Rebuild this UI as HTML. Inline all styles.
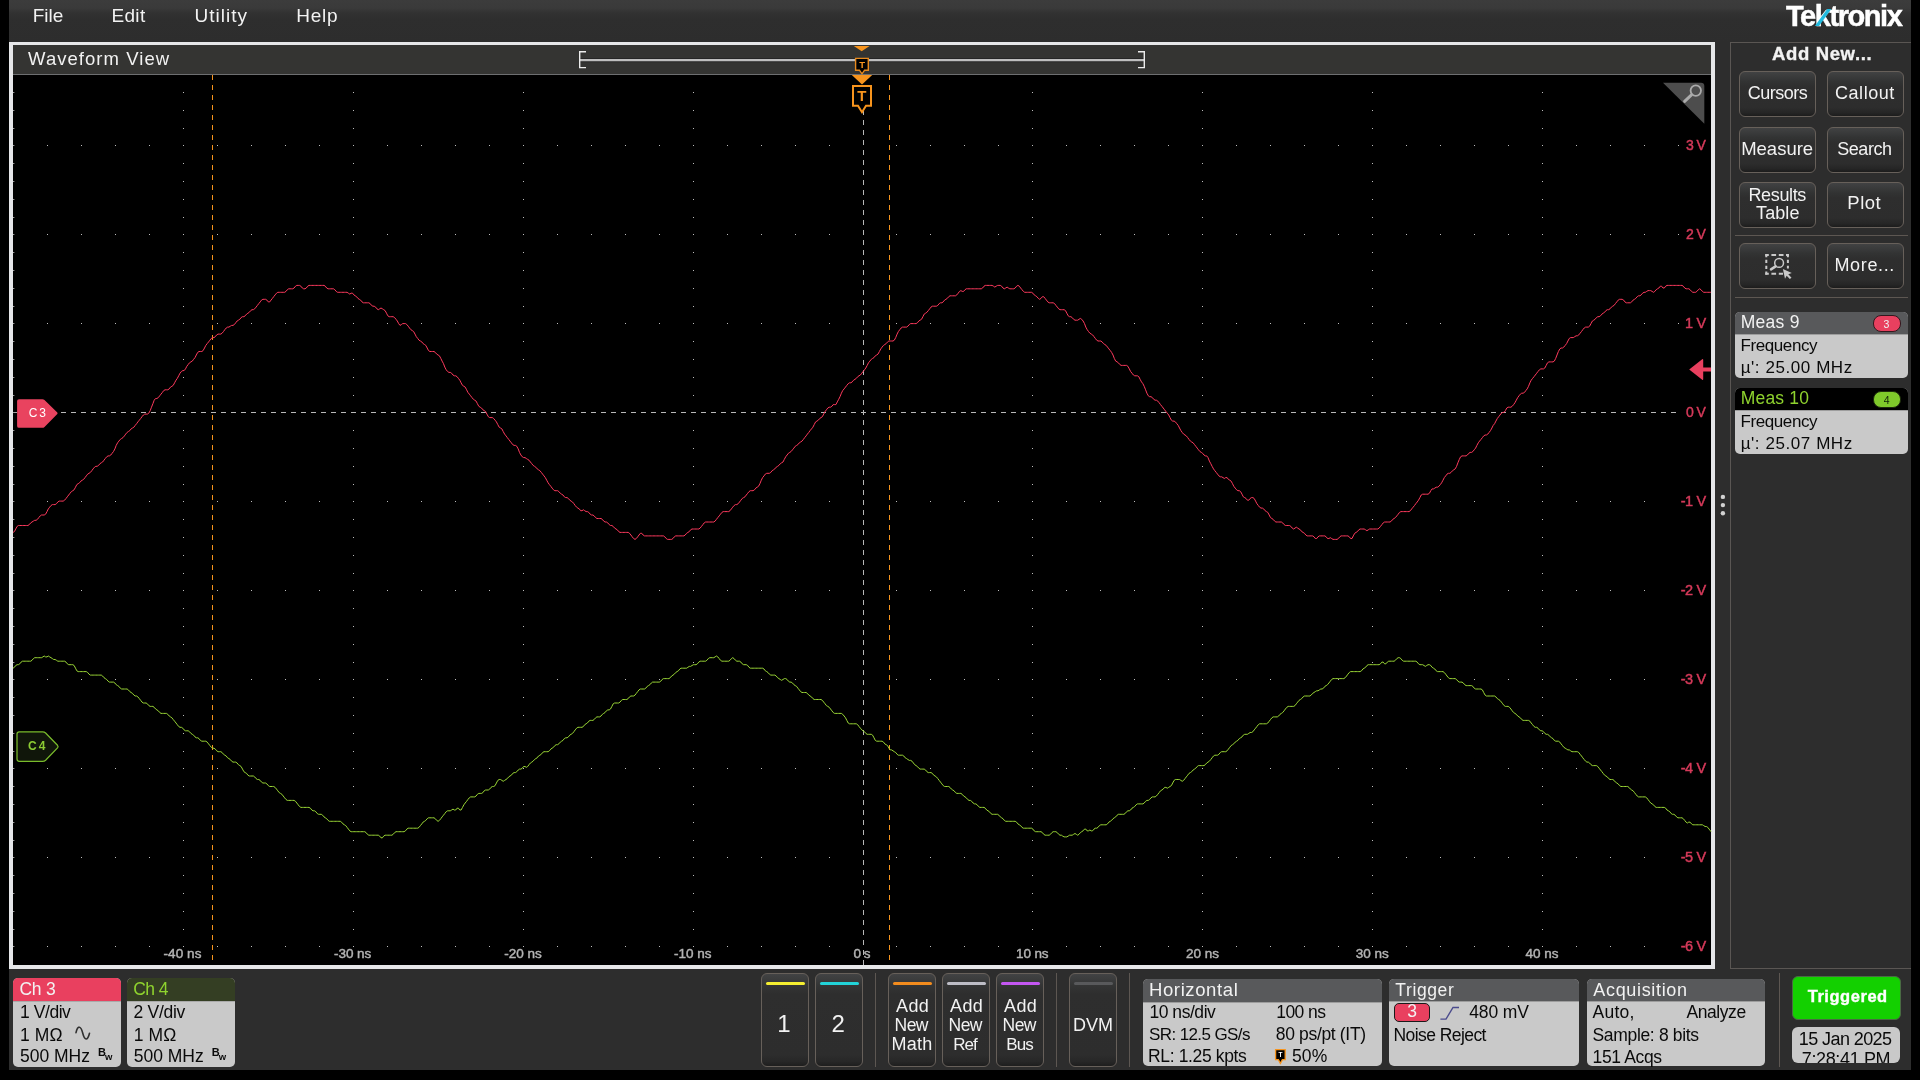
<!DOCTYPE html>
<html lang="en"><head><meta charset="utf-8"><title>Tektronix Waveform View</title>
<style>
html,body{margin:0;padding:0;background:#000}
body{width:1920px;height:1080px;position:relative;overflow:hidden;font-family:"Liberation Sans",sans-serif}
.a{position:absolute}
.t{position:absolute;white-space:pre;line-height:1}
.btn{position:absolute;box-sizing:border-box;border:1px solid #67605a;border-radius:6px;background:linear-gradient(#414243 0,#323333 22%,#2e2e2e 34%,#2d2d2d 80%,#262626 92%,#1c1c1c 100%)}
.vbtn{position:absolute;box-sizing:border-box;border:1px solid #67605a;border-radius:6px;background:linear-gradient(#424344 0,#343535 12%,#2e2e2e 22%,#2d2d2d 88%,#272727 95%,#1e1e1e 100%)}
.bar{position:absolute;height:3.4px;border-radius:2px;width:39px;top:981.8px}
.sep{position:absolute;width:1px;background:#5d5752}
.badge{position:absolute;background:#c9c9c9;border-radius:5px;overflow:hidden}
.bh{position:absolute;left:0;top:0;right:0;background:#58595b;border-bottom:1px solid #9d9d9d}
</style></head>
<body>
<!-- window background -->
<div class="a" style="left:9px;top:0;width:1902px;height:1070px;background:#2d2d2d"></div>
<div class="a" style="left:9px;top:0;width:1902px;height:42px;background:linear-gradient(#3c3c3c 0,#3a3a3a 19%,#323232 30%,#2e2e2e 45%,#2d2d2d 100%)"></div>

<!-- waveform frame -->
<div class="a" style="left:9px;top:42px;width:1706px;height:927px;background:#e6e7e9"></div>
<div class="a" style="left:13px;top:45px;width:1698px;height:29px;background:#343432"></div>
<div class="a" style="left:13px;top:74px;width:1698px;height:1px;background:#6e6f71"></div>
<div class="a" style="left:13px;top:75px;width:1698px;height:890px;background:#000"></div>

<!-- right panel -->
<div class="a" style="left:1730px;top:42px;width:181px;height:927px;box-sizing:border-box;border:1px solid #5a5653;border-right:none"></div>
<div class="btn" style="left:1739.4px;top:71.2px;width:77px;height:46px"></div>
<div class="btn" style="left:1826.6px;top:71.2px;width:77px;height:46px"></div>
<div class="btn" style="left:1739.4px;top:127.4px;width:77px;height:45.6px"></div>
<div class="btn" style="left:1826.6px;top:127.4px;width:77px;height:45.6px"></div>
<div class="btn" style="left:1739.4px;top:182.4px;width:77px;height:45.6px"></div>
<div class="btn" style="left:1826.6px;top:182.4px;width:77px;height:45.6px"></div>
<div class="a" style="left:1735px;top:235px;width:173px;height:1px;background:#5d5752"></div>
<div class="btn" style="left:1739.4px;top:243.4px;width:77px;height:45.6px"></div>
<div class="btn" style="left:1826.6px;top:243.4px;width:77px;height:45.6px"></div>
<div class="a" style="left:1735px;top:297px;width:173px;height:1px;background:#5d5752"></div>

<!-- measurement badges -->
<div class="badge" style="left:1735px;top:312px;width:173px;height:66px"><div class="bh" style="height:22px"></div></div>
<div class="a" style="left:1873px;top:315px;width:28px;height:16.5px;box-sizing:border-box;border-radius:8px;background:#e9405f;border:1px solid #33181e"></div>
<div class="badge" style="left:1735px;top:388px;width:173px;height:66px"><div class="bh" style="height:22px;background:#000"></div></div>
<div class="a" style="left:1873px;top:391px;width:28px;height:16.5px;box-sizing:border-box;border-radius:8px;background:#7fc92b;border:1px solid #1c2a0c"></div>

<!-- bottom: channel badges -->
<div class="badge" style="left:13px;top:978px;width:108px;height:88.5px"><div class="bh" style="height:22.5px;background:#e9405f;border-bottom-color:#aaa"></div></div>
<div class="badge" style="left:126.75px;top:978px;width:108px;height:88.5px"><div class="bh" style="height:22.5px;background:#343e23;border-bottom-color:#aaa"></div></div>

<!-- bottom: buttons -->
<div class="vbtn" style="left:761px;top:973px;width:48px;height:94px"></div>
<div class="vbtn" style="left:815px;top:973px;width:48px;height:94px"></div>
<div class="sep" style="left:875px;top:973px;height:94px"></div>
<div class="vbtn" style="left:888px;top:973px;width:48px;height:94px"></div>
<div class="vbtn" style="left:942px;top:973px;width:48px;height:94px"></div>
<div class="vbtn" style="left:996px;top:973px;width:48px;height:94px"></div>
<div class="sep" style="left:1056px;top:973px;height:94px"></div>
<div class="vbtn" style="left:1069px;top:973px;width:48px;height:94px"></div>
<div class="sep" style="left:1129px;top:973px;height:94px"></div>
<div class="bar" style="left:765.5px;background:#f5ee31"></div>
<div class="bar" style="left:819.5px;background:#22d3d8"></div>
<div class="bar" style="left:892.5px;background:#f28c1e"></div>
<div class="bar" style="left:946.5px;background:#bdbdc6"></div>
<div class="bar" style="left:1000.5px;background:#c457f2"></div>
<div class="bar" style="left:1073.5px;background:#58595b"></div>

<!-- bottom: info badges -->
<div class="badge" style="left:1143px;top:979.2px;width:238.5px;height:87px"><div class="bh" style="height:22.5px"></div></div>
<div class="badge" style="left:1388.7px;top:979.2px;width:190.6px;height:87px"><div class="bh" style="height:22px"></div></div>
<div class="badge" style="left:1586.8px;top:979.2px;width:178.4px;height:87px"><div class="bh" style="height:22px"></div></div>
<div class="a" style="left:1394px;top:1003px;width:36px;height:19px;box-sizing:border-box;border-radius:5px;background:#e9405f;border:1px solid #1a1a1a"></div>
<div class="sep" style="left:1779px;top:973px;height:94px"></div>
<div class="a" style="left:1792.4px;top:976.2px;width:108.6px;height:44px;box-sizing:border-box;border-radius:6px;background:#13d000;border:1px solid #4a6a44"></div>
<div class="a" style="left:1792.2px;top:1026.5px;width:108px;height:35.7px;border-radius:6px;background:#c9c9c9;overflow:hidden;will-change:transform">
<div class="a" style="left:-1792.2px;top:-1026.5px;width:0;height:0"><div class="t" style="left:1799.00px;top:1029px;font-size:18.0px;color:#0a0a0a;letter-spacing:-0.59px;">15 Jan 2025</div>
<div class="t" style="left:1802.00px;top:1049px;font-size:18.0px;color:#0a0a0a;letter-spacing:-0.37px;">7:28:41 PM</div></div>
</div>

<!-- logo -->
<div class="t" id="logo" style="left:1785.5px;top:2px;font-size:29px;font-weight:bold;color:#fff;letter-spacing:-1.45px;-webkit-text-stroke:0.5px #fff;will-change:transform">Tektronix</div>

<!-- graphics -->
<svg class="a" style="left:0;top:0" width="1920" height="1080" viewBox="0 0 1920 1080">
<path d="M47 145.5h1M47 234.5h1M47 323.5h1M47 501.5h1M47 590.5h1M47 679.5h1M47 768.5h1M47 857.5h1M47 946.5h1M81 145.5h1M81 234.5h1M81 323.5h1M81 501.5h1M81 590.5h1M81 679.5h1M81 768.5h1M81 857.5h1M81 946.5h1M115 145.5h1M115 234.5h1M115 323.5h1M115 501.5h1M115 590.5h1M115 679.5h1M115 768.5h1M115 857.5h1M115 946.5h1M149 145.5h1M149 234.5h1M149 323.5h1M149 501.5h1M149 590.5h1M149 679.5h1M149 768.5h1M149 857.5h1M149 946.5h1M183 92.5h1M183 110.5h1M183 128.5h1M183 145.5h1M183 163.5h1M183 181.5h1M183 199.5h1M183 217.5h1M183 234.5h1M183 252.5h1M183 270.5h1M183 288.5h1M183 306.5h1M183 323.5h1M183 341.5h1M183 359.5h1M183 377.5h1M183 395.5h1M183 412.5h1M183 430.5h1M183 448.5h1M183 466.5h1M183 484.5h1M183 501.5h1M183 519.5h1M183 537.5h1M183 555.5h1M183 573.5h1M183 590.5h1M183 608.5h1M183 626.5h1M183 644.5h1M183 662.5h1M183 679.5h1M183 697.5h1M183 715.5h1M183 733.5h1M183 751.5h1M183 768.5h1M183 786.5h1M183 804.5h1M183 822.5h1M183 840.5h1M183 857.5h1M183 875.5h1M183 893.5h1M183 911.5h1M183 929.5h1M183 946.5h1M217 145.5h1M217 234.5h1M217 323.5h1M217 501.5h1M217 590.5h1M217 679.5h1M217 768.5h1M217 857.5h1M217 946.5h1M251 145.5h1M251 234.5h1M251 323.5h1M251 501.5h1M251 590.5h1M251 679.5h1M251 768.5h1M251 857.5h1M251 946.5h1M285 145.5h1M285 234.5h1M285 323.5h1M285 501.5h1M285 590.5h1M285 679.5h1M285 768.5h1M285 857.5h1M285 946.5h1M319 145.5h1M319 234.5h1M319 323.5h1M319 501.5h1M319 590.5h1M319 679.5h1M319 768.5h1M319 857.5h1M319 946.5h1M353 92.5h1M353 110.5h1M353 128.5h1M353 145.5h1M353 163.5h1M353 181.5h1M353 199.5h1M353 217.5h1M353 234.5h1M353 252.5h1M353 270.5h1M353 288.5h1M353 306.5h1M353 323.5h1M353 341.5h1M353 359.5h1M353 377.5h1M353 395.5h1M353 412.5h1M353 430.5h1M353 448.5h1M353 466.5h1M353 484.5h1M353 501.5h1M353 519.5h1M353 537.5h1M353 555.5h1M353 573.5h1M353 590.5h1M353 608.5h1M353 626.5h1M353 644.5h1M353 662.5h1M353 679.5h1M353 697.5h1M353 715.5h1M353 733.5h1M353 751.5h1M353 768.5h1M353 786.5h1M353 804.5h1M353 822.5h1M353 840.5h1M353 857.5h1M353 875.5h1M353 893.5h1M353 911.5h1M353 929.5h1M353 946.5h1M387 145.5h1M387 234.5h1M387 323.5h1M387 501.5h1M387 590.5h1M387 679.5h1M387 768.5h1M387 857.5h1M387 946.5h1M421 145.5h1M421 234.5h1M421 323.5h1M421 501.5h1M421 590.5h1M421 679.5h1M421 768.5h1M421 857.5h1M421 946.5h1M455 145.5h1M455 234.5h1M455 323.5h1M455 501.5h1M455 590.5h1M455 679.5h1M455 768.5h1M455 857.5h1M455 946.5h1M489 145.5h1M489 234.5h1M489 323.5h1M489 501.5h1M489 590.5h1M489 679.5h1M489 768.5h1M489 857.5h1M489 946.5h1M523 92.5h1M523 110.5h1M523 128.5h1M523 145.5h1M523 163.5h1M523 181.5h1M523 199.5h1M523 217.5h1M523 234.5h1M523 252.5h1M523 270.5h1M523 288.5h1M523 306.5h1M523 323.5h1M523 341.5h1M523 359.5h1M523 377.5h1M523 395.5h1M523 412.5h1M523 430.5h1M523 448.5h1M523 466.5h1M523 484.5h1M523 501.5h1M523 519.5h1M523 537.5h1M523 555.5h1M523 573.5h1M523 590.5h1M523 608.5h1M523 626.5h1M523 644.5h1M523 662.5h1M523 679.5h1M523 697.5h1M523 715.5h1M523 733.5h1M523 751.5h1M523 768.5h1M523 786.5h1M523 804.5h1M523 822.5h1M523 840.5h1M523 857.5h1M523 875.5h1M523 893.5h1M523 911.5h1M523 929.5h1M523 946.5h1M557 145.5h1M557 234.5h1M557 323.5h1M557 501.5h1M557 590.5h1M557 679.5h1M557 768.5h1M557 857.5h1M557 946.5h1M591 145.5h1M591 234.5h1M591 323.5h1M591 501.5h1M591 590.5h1M591 679.5h1M591 768.5h1M591 857.5h1M591 946.5h1M625 145.5h1M625 234.5h1M625 323.5h1M625 501.5h1M625 590.5h1M625 679.5h1M625 768.5h1M625 857.5h1M625 946.5h1M659 145.5h1M659 234.5h1M659 323.5h1M659 501.5h1M659 590.5h1M659 679.5h1M659 768.5h1M659 857.5h1M659 946.5h1M693 92.5h1M693 110.5h1M693 128.5h1M693 145.5h1M693 163.5h1M693 181.5h1M693 199.5h1M693 217.5h1M693 234.5h1M693 252.5h1M693 270.5h1M693 288.5h1M693 306.5h1M693 323.5h1M693 341.5h1M693 359.5h1M693 377.5h1M693 395.5h1M693 412.5h1M693 430.5h1M693 448.5h1M693 466.5h1M693 484.5h1M693 501.5h1M693 519.5h1M693 537.5h1M693 555.5h1M693 573.5h1M693 590.5h1M693 608.5h1M693 626.5h1M693 644.5h1M693 662.5h1M693 679.5h1M693 697.5h1M693 715.5h1M693 733.5h1M693 751.5h1M693 768.5h1M693 786.5h1M693 804.5h1M693 822.5h1M693 840.5h1M693 857.5h1M693 875.5h1M693 893.5h1M693 911.5h1M693 929.5h1M693 946.5h1M727 145.5h1M727 234.5h1M727 323.5h1M727 501.5h1M727 590.5h1M727 679.5h1M727 768.5h1M727 857.5h1M727 946.5h1M761 145.5h1M761 234.5h1M761 323.5h1M761 501.5h1M761 590.5h1M761 679.5h1M761 768.5h1M761 857.5h1M761 946.5h1M795 145.5h1M795 234.5h1M795 323.5h1M795 501.5h1M795 590.5h1M795 679.5h1M795 768.5h1M795 857.5h1M795 946.5h1M829 145.5h1M829 234.5h1M829 323.5h1M829 501.5h1M829 590.5h1M829 679.5h1M829 768.5h1M829 857.5h1M829 946.5h1M896 145.5h1M896 234.5h1M896 323.5h1M896 501.5h1M896 590.5h1M896 679.5h1M896 768.5h1M896 857.5h1M896 946.5h1M930 145.5h1M930 234.5h1M930 323.5h1M930 501.5h1M930 590.5h1M930 679.5h1M930 768.5h1M930 857.5h1M930 946.5h1M964 145.5h1M964 234.5h1M964 323.5h1M964 501.5h1M964 590.5h1M964 679.5h1M964 768.5h1M964 857.5h1M964 946.5h1M998 145.5h1M998 234.5h1M998 323.5h1M998 501.5h1M998 590.5h1M998 679.5h1M998 768.5h1M998 857.5h1M998 946.5h1M1032 92.5h1M1032 110.5h1M1032 128.5h1M1032 145.5h1M1032 163.5h1M1032 181.5h1M1032 199.5h1M1032 217.5h1M1032 234.5h1M1032 252.5h1M1032 270.5h1M1032 288.5h1M1032 306.5h1M1032 323.5h1M1032 341.5h1M1032 359.5h1M1032 377.5h1M1032 395.5h1M1032 412.5h1M1032 430.5h1M1032 448.5h1M1032 466.5h1M1032 484.5h1M1032 501.5h1M1032 519.5h1M1032 537.5h1M1032 555.5h1M1032 573.5h1M1032 590.5h1M1032 608.5h1M1032 626.5h1M1032 644.5h1M1032 662.5h1M1032 679.5h1M1032 697.5h1M1032 715.5h1M1032 733.5h1M1032 751.5h1M1032 768.5h1M1032 786.5h1M1032 804.5h1M1032 822.5h1M1032 840.5h1M1032 857.5h1M1032 875.5h1M1032 893.5h1M1032 911.5h1M1032 929.5h1M1032 946.5h1M1066 145.5h1M1066 234.5h1M1066 323.5h1M1066 501.5h1M1066 590.5h1M1066 679.5h1M1066 768.5h1M1066 857.5h1M1066 946.5h1M1100 145.5h1M1100 234.5h1M1100 323.5h1M1100 501.5h1M1100 590.5h1M1100 679.5h1M1100 768.5h1M1100 857.5h1M1100 946.5h1M1134 145.5h1M1134 234.5h1M1134 323.5h1M1134 501.5h1M1134 590.5h1M1134 679.5h1M1134 768.5h1M1134 857.5h1M1134 946.5h1M1168 145.5h1M1168 234.5h1M1168 323.5h1M1168 501.5h1M1168 590.5h1M1168 679.5h1M1168 768.5h1M1168 857.5h1M1168 946.5h1M1202 92.5h1M1202 110.5h1M1202 128.5h1M1202 145.5h1M1202 163.5h1M1202 181.5h1M1202 199.5h1M1202 217.5h1M1202 234.5h1M1202 252.5h1M1202 270.5h1M1202 288.5h1M1202 306.5h1M1202 323.5h1M1202 341.5h1M1202 359.5h1M1202 377.5h1M1202 395.5h1M1202 412.5h1M1202 430.5h1M1202 448.5h1M1202 466.5h1M1202 484.5h1M1202 501.5h1M1202 519.5h1M1202 537.5h1M1202 555.5h1M1202 573.5h1M1202 590.5h1M1202 608.5h1M1202 626.5h1M1202 644.5h1M1202 662.5h1M1202 679.5h1M1202 697.5h1M1202 715.5h1M1202 733.5h1M1202 751.5h1M1202 768.5h1M1202 786.5h1M1202 804.5h1M1202 822.5h1M1202 840.5h1M1202 857.5h1M1202 875.5h1M1202 893.5h1M1202 911.5h1M1202 929.5h1M1202 946.5h1M1236 145.5h1M1236 234.5h1M1236 323.5h1M1236 501.5h1M1236 590.5h1M1236 679.5h1M1236 768.5h1M1236 857.5h1M1236 946.5h1M1270 145.5h1M1270 234.5h1M1270 323.5h1M1270 501.5h1M1270 590.5h1M1270 679.5h1M1270 768.5h1M1270 857.5h1M1270 946.5h1M1304 145.5h1M1304 234.5h1M1304 323.5h1M1304 501.5h1M1304 590.5h1M1304 679.5h1M1304 768.5h1M1304 857.5h1M1304 946.5h1M1338 145.5h1M1338 234.5h1M1338 323.5h1M1338 501.5h1M1338 590.5h1M1338 679.5h1M1338 768.5h1M1338 857.5h1M1338 946.5h1M1372 92.5h1M1372 110.5h1M1372 128.5h1M1372 145.5h1M1372 163.5h1M1372 181.5h1M1372 199.5h1M1372 217.5h1M1372 234.5h1M1372 252.5h1M1372 270.5h1M1372 288.5h1M1372 306.5h1M1372 323.5h1M1372 341.5h1M1372 359.5h1M1372 377.5h1M1372 395.5h1M1372 412.5h1M1372 430.5h1M1372 448.5h1M1372 466.5h1M1372 484.5h1M1372 501.5h1M1372 519.5h1M1372 537.5h1M1372 555.5h1M1372 573.5h1M1372 590.5h1M1372 608.5h1M1372 626.5h1M1372 644.5h1M1372 662.5h1M1372 679.5h1M1372 697.5h1M1372 715.5h1M1372 733.5h1M1372 751.5h1M1372 768.5h1M1372 786.5h1M1372 804.5h1M1372 822.5h1M1372 840.5h1M1372 857.5h1M1372 875.5h1M1372 893.5h1M1372 911.5h1M1372 929.5h1M1372 946.5h1M1406 145.5h1M1406 234.5h1M1406 323.5h1M1406 501.5h1M1406 590.5h1M1406 679.5h1M1406 768.5h1M1406 857.5h1M1406 946.5h1M1440 145.5h1M1440 234.5h1M1440 323.5h1M1440 501.5h1M1440 590.5h1M1440 679.5h1M1440 768.5h1M1440 857.5h1M1440 946.5h1M1474 145.5h1M1474 234.5h1M1474 323.5h1M1474 501.5h1M1474 590.5h1M1474 679.5h1M1474 768.5h1M1474 857.5h1M1474 946.5h1M1508 145.5h1M1508 234.5h1M1508 323.5h1M1508 501.5h1M1508 590.5h1M1508 679.5h1M1508 768.5h1M1508 857.5h1M1508 946.5h1M1542 92.5h1M1542 110.5h1M1542 128.5h1M1542 145.5h1M1542 163.5h1M1542 181.5h1M1542 199.5h1M1542 217.5h1M1542 234.5h1M1542 252.5h1M1542 270.5h1M1542 288.5h1M1542 306.5h1M1542 323.5h1M1542 341.5h1M1542 359.5h1M1542 377.5h1M1542 395.5h1M1542 412.5h1M1542 430.5h1M1542 448.5h1M1542 466.5h1M1542 484.5h1M1542 501.5h1M1542 519.5h1M1542 537.5h1M1542 555.5h1M1542 573.5h1M1542 590.5h1M1542 608.5h1M1542 626.5h1M1542 644.5h1M1542 662.5h1M1542 679.5h1M1542 697.5h1M1542 715.5h1M1542 733.5h1M1542 751.5h1M1542 768.5h1M1542 786.5h1M1542 804.5h1M1542 822.5h1M1542 840.5h1M1542 857.5h1M1542 875.5h1M1542 893.5h1M1542 911.5h1M1542 929.5h1M1542 946.5h1M1576 145.5h1M1576 234.5h1M1576 323.5h1M1576 501.5h1M1576 590.5h1M1576 679.5h1M1576 768.5h1M1576 857.5h1M1576 946.5h1M1610 145.5h1M1610 234.5h1M1610 323.5h1M1610 501.5h1M1610 590.5h1M1610 679.5h1M1610 768.5h1M1610 857.5h1M1610 946.5h1M1644 145.5h1M1644 234.5h1M1644 323.5h1M1644 501.5h1M1644 590.5h1M1644 679.5h1M1644 768.5h1M1644 857.5h1M1644 946.5h1M1678 145.5h1M1678 234.5h1M1678 323.5h1" stroke="#bdbdbd" stroke-width="1" shape-rendering="crispEdges" fill="none"/>
<path d="M13 412.5h3.5" stroke="#aaa" stroke-width="1" shape-rendering="crispEdges"/>
<path d="M13 92.5h1.4M13 110.5h1.4M13 128.5h1.4M13 145.5h1.4M13 163.5h1.4M13 181.5h1.4M13 199.5h1.4M13 217.5h1.4M13 234.5h1.4M13 252.5h1.4M13 270.5h1.4M13 288.5h1.4M13 306.5h1.4M13 323.5h1.4M13 341.5h1.4M13 359.5h1.4M13 377.5h1.4M13 395.5h1.4M13 412.5h1.4M13 430.5h1.4M13 448.5h1.4M13 466.5h1.4M13 484.5h1.4M13 501.5h1.4M13 519.5h1.4M13 537.5h1.4M13 555.5h1.4M13 573.5h1.4M13 590.5h1.4M13 608.5h1.4M13 626.5h1.4M13 644.5h1.4M13 662.5h1.4M13 679.5h1.4M13 697.5h1.4M13 715.5h1.4M13 733.5h1.4M13 751.5h1.4M13 768.5h1.4M13 786.5h1.4M13 804.5h1.4M13 822.5h1.4M13 840.5h1.4M13 857.5h1.4M13 875.5h1.4M13 893.5h1.4M13 911.5h1.4M13 929.5h1.4M13 946.5h1.4" stroke="#9a9a9a" stroke-width="1" fill="none"/>
<g shape-rendering="crispEdges" stroke-width="1" fill="none">
<line x1="61" y1="412.5" x2="1676" y2="412.5" stroke="#b9b9b9" stroke-dasharray="5 5"/>
<line x1="863.5" y1="110" x2="863.5" y2="965" stroke="#b9b9b9" stroke-dasharray="5 5"/>
<line x1="212.5" y1="75" x2="212.5" y2="960" stroke="#f7941d" stroke-dasharray="5 5"/>
<line x1="889.5" y1="75" x2="889.5" y2="960" stroke="#f7941d" stroke-dasharray="5 5"/>
</g>
<path d="M13.0 668.2L14.4 667.3L15.7 665.5L17.1 664.7L18.4 664.7L19.8 663.8L21.1 662.1L22.5 661.2L23.9 661.2L25.2 661.2L26.6 661.2L27.9 661.2L29.3 661.2L30.7 661.2L32.0 660.3L33.4 658.6L34.7 657.7L36.1 657.7L37.4 657.7L38.8 657.7L40.2 657.7L41.5 657.7L42.9 656.9L44.2 656.0L45.6 656.9L47.0 656.9L48.3 656.0L49.7 656.9L51.0 657.7L52.4 658.6L53.7 659.5L55.1 659.5L56.5 660.3L57.8 661.2L59.2 661.2L60.5 661.2L61.9 661.2L63.2 661.2L64.6 661.2L66.0 662.1L67.3 663.8L68.7 664.7L70.0 664.7L71.4 664.7L72.8 664.7L74.1 665.5L75.5 668.2L76.8 670.8L78.2 671.6L79.5 671.6L80.9 671.6L82.3 671.6L83.6 671.6L85.0 671.6L86.3 671.6L87.7 672.5L89.0 674.2L90.4 675.1L91.8 675.1L93.1 675.1L94.5 675.1L95.8 675.1L97.2 675.1L98.6 675.1L99.9 675.1L101.3 675.1L102.6 676.0L104.0 677.7L105.3 678.6L106.7 679.5L108.1 681.2L109.4 682.1L110.8 682.1L112.1 682.1L113.5 682.1L114.9 683.0L116.2 684.7L117.6 685.6L118.9 686.4L120.3 688.2L121.6 689.0L123.0 689.0L124.4 689.0L125.7 689.0L127.1 689.0L128.4 689.9L129.8 691.6L131.1 692.5L132.5 693.4L133.9 695.1L135.2 696.0L136.6 696.0L137.9 696.9L139.3 698.6L140.7 700.4L142.0 702.1L143.4 703.0L144.7 703.0L146.1 703.0L147.4 703.8L148.8 705.6L150.2 706.4L151.5 706.4L152.9 706.4L154.2 707.3L155.6 709.0L156.9 709.9L158.3 710.8L159.7 712.5L161.0 713.4L162.4 713.4L163.7 713.4L165.1 713.4L166.5 713.4L167.8 714.3L169.2 716.0L170.5 716.9L171.9 717.8L173.2 719.5L174.6 721.2L176.0 723.0L177.3 724.7L178.7 726.5L180.0 727.3L181.4 727.3L182.8 728.2L184.1 729.9L185.5 730.8L186.8 730.8L188.2 730.8L189.5 731.7L190.9 733.4L192.3 734.3L193.6 735.2L195.0 736.9L196.3 737.8L197.7 737.8L199.0 738.6L200.4 740.4L201.8 741.2L203.1 741.2L204.5 741.2L205.8 741.2L207.2 742.1L208.6 743.9L209.9 745.6L211.3 747.3L212.6 748.2L214.0 748.2L215.3 749.1L216.7 750.8L218.1 751.7L219.4 751.7L220.8 751.7L222.1 752.5L223.5 754.3L224.8 755.2L226.2 756.0L227.6 757.8L228.9 758.6L230.3 759.5L231.6 761.2L233.0 762.1L234.4 762.1L235.7 762.1L237.1 763.0L238.4 764.7L239.8 765.6L241.1 766.5L242.5 769.1L243.9 771.7L245.2 772.6L246.6 773.4L247.9 775.2L249.3 776.0L250.7 776.0L252.0 776.0L253.4 776.0L254.7 776.9L256.1 778.6L257.4 779.5L258.8 779.5L260.2 780.4L261.5 782.1L262.9 783.0L264.2 783.0L265.6 783.0L266.9 783.9L268.3 785.6L269.7 786.5L271.0 786.5L272.4 786.5L273.7 786.5L275.1 787.4L276.5 789.1L277.8 790.8L279.2 792.6L280.5 793.4L281.9 794.3L283.2 796.0L284.6 797.8L286.0 799.5L287.3 800.4L288.7 800.4L290.0 800.4L291.4 800.4L292.7 800.4L294.1 800.4L295.5 801.3L296.8 803.0L298.2 804.8L299.5 806.5L300.9 807.4L302.3 807.4L303.6 807.4L305.0 807.4L306.3 807.4L307.7 807.4L309.0 807.4L310.4 808.2L311.8 810.0L313.1 810.8L314.5 810.8L315.8 811.7L317.2 813.5L318.6 814.3L319.9 814.3L321.3 814.3L322.6 815.2L324.0 816.9L325.3 817.8L326.7 818.7L328.1 820.4L329.4 821.3L330.8 821.3L332.1 821.3L333.5 821.3L334.8 821.3L336.2 821.3L337.6 821.3L338.9 821.3L340.3 821.3L341.6 822.2L343.0 823.9L344.4 824.8L345.7 825.6L347.1 827.4L348.4 829.1L349.8 830.9L351.1 831.7L352.5 831.7L353.9 831.7L355.2 831.7L356.6 831.7L357.9 831.7L359.3 831.7L360.6 831.7L362.0 831.7L363.4 831.7L364.7 831.7L366.1 832.6L367.4 834.3L368.8 835.2L370.2 835.2L371.5 835.2L372.9 835.2L374.2 835.2L375.6 835.2L376.9 835.2L378.3 835.2L379.7 836.1L381.0 837.8L382.4 837.8L383.7 836.1L385.1 835.2L386.5 835.2L387.8 835.2L389.2 835.2L390.5 835.2L391.9 835.2L393.2 834.3L394.6 832.6L396.0 831.7L397.3 831.7L398.7 831.7L400.0 831.7L401.4 831.7L402.7 831.7L404.1 831.7L405.5 830.8L406.8 829.1L408.2 828.2L409.5 828.2L410.9 828.2L412.3 828.2L413.6 828.2L415.0 828.2L416.3 828.2L417.7 828.2L419.0 827.4L420.4 825.6L421.8 823.9L423.1 822.1L424.5 821.3L425.8 820.4L427.2 818.7L428.5 817.8L429.9 817.8L431.3 817.8L432.6 817.8L434.0 817.8L435.3 818.7L436.7 820.4L438.1 821.3L439.4 820.4L440.8 818.7L442.1 816.9L443.5 815.2L444.8 813.5L446.2 811.7L447.6 810.8L448.9 810.8L450.3 810.8L451.6 810.0L453.0 809.1L454.4 810.0L455.7 810.0L457.1 808.2L458.4 808.2L459.8 810.0L461.1 810.0L462.5 807.4L463.9 804.8L465.2 803.0L466.6 801.3L467.9 799.5L469.3 797.8L470.6 796.9L472.0 796.9L473.4 796.9L474.7 796.9L476.1 796.0L477.4 794.3L478.8 793.4L480.2 793.4L481.5 793.4L482.9 792.6L484.2 790.8L485.6 790.0L486.9 790.0L488.3 790.0L489.7 789.1L491.0 787.4L492.4 786.5L493.7 786.5L495.1 785.6L496.4 783.0L497.8 780.4L499.2 779.5L500.5 779.5L501.9 780.4L503.2 781.3L504.6 780.4L506.0 779.5L507.3 778.6L508.7 776.9L510.0 776.0L511.4 775.2L512.7 773.4L514.1 772.6L515.5 772.6L516.8 771.7L518.2 770.0L519.5 769.1L520.9 769.1L522.3 768.2L523.6 766.5L525.0 766.5L526.3 767.3L527.7 766.5L529.0 764.7L530.4 763.0L531.8 762.1L533.1 761.2L534.5 759.5L535.8 758.6L537.2 757.8L538.5 756.0L539.9 755.2L541.3 754.3L542.6 752.5L544.0 751.7L545.3 751.7L546.7 751.7L548.1 751.7L549.4 750.8L550.8 749.1L552.1 748.2L553.5 747.3L554.8 745.6L556.2 744.7L557.6 744.7L558.9 743.8L560.3 742.1L561.6 741.2L563.0 740.4L564.3 738.6L565.7 737.8L567.1 737.8L568.4 736.9L569.8 735.1L571.1 734.3L572.5 733.4L573.9 731.7L575.2 729.9L576.6 728.2L577.9 727.3L579.3 727.3L580.6 727.3L582.0 727.3L583.4 726.5L584.7 724.7L586.1 723.8L587.4 723.0L588.8 721.2L590.2 720.4L591.5 720.4L592.9 720.4L594.2 719.5L595.6 717.8L596.9 716.9L598.3 716.9L599.7 716.9L601.0 716.0L602.4 714.3L603.7 713.4L605.1 712.5L606.4 710.8L607.8 709.9L609.2 709.9L610.5 709.0L611.9 706.4L613.2 703.8L614.6 703.0L616.0 703.0L617.3 703.0L618.7 703.0L620.0 702.1L621.4 700.4L622.7 699.5L624.1 699.5L625.5 699.5L626.8 699.5L628.2 698.6L629.5 696.9L630.9 696.0L632.2 696.0L633.6 696.0L635.0 695.1L636.3 693.4L637.7 691.6L639.0 689.9L640.4 689.0L641.8 689.0L643.1 689.0L644.5 689.0L645.8 688.2L647.2 686.4L648.5 685.6L649.9 684.7L651.3 683.0L652.6 682.1L654.0 682.1L655.3 682.1L656.7 682.1L658.1 682.1L659.4 682.1L660.8 681.2L662.1 679.5L663.5 678.6L664.8 678.6L666.2 678.6L667.6 678.6L668.9 678.6L670.3 677.7L671.6 676.0L673.0 675.1L674.3 674.2L675.7 672.5L677.1 671.6L678.4 670.8L679.8 669.0L681.1 668.2L682.5 668.2L683.9 668.2L685.2 668.2L686.6 668.2L687.9 667.3L689.3 666.4L690.6 666.4L692.0 665.5L693.4 664.7L694.7 664.7L696.1 664.7L697.4 663.8L698.8 662.1L700.1 661.2L701.5 661.2L702.9 661.2L704.2 661.2L705.6 661.2L706.9 660.3L708.3 658.6L709.7 657.7L711.0 657.7L712.4 657.7L713.7 657.7L715.1 656.9L716.4 656.0L717.8 656.9L719.2 658.6L720.5 660.3L721.9 661.2L723.2 661.2L724.6 661.2L726.0 661.2L727.3 661.2L728.7 661.2L730.0 660.3L731.4 658.6L732.7 657.7L734.1 658.6L735.5 660.3L736.8 661.2L738.2 661.2L739.5 661.2L740.9 662.1L742.2 663.8L743.6 664.7L745.0 664.7L746.3 664.7L747.7 665.5L749.0 667.3L750.4 668.2L751.8 668.2L753.1 668.2L754.5 668.2L755.8 668.2L757.2 668.2L758.5 668.2L759.9 668.2L761.3 668.2L762.6 668.2L764.0 669.0L765.3 670.8L766.7 671.6L768.0 672.5L769.4 674.2L770.8 675.1L772.1 675.1L773.5 675.1L774.8 675.1L776.2 676.0L777.6 677.7L778.9 678.6L780.3 679.5L781.6 680.3L783.0 679.5L784.3 678.6L785.7 678.6L787.1 679.5L788.4 681.2L789.8 682.1L791.1 682.1L792.5 683.0L793.9 684.7L795.2 685.6L796.6 686.4L797.9 688.2L799.3 689.9L800.6 691.6L802.0 692.5L803.4 692.5L804.7 692.5L806.1 692.5L807.4 693.4L808.8 695.1L810.1 696.0L811.5 696.9L812.9 698.6L814.2 699.5L815.6 699.5L816.9 699.5L818.3 699.5L819.7 699.5L821.0 699.5L822.4 700.4L823.7 702.1L825.1 703.8L826.4 705.6L827.8 706.4L829.2 707.3L830.5 709.0L831.9 710.8L833.2 712.5L834.6 713.4L835.9 713.4L837.3 713.4L838.7 713.4L840.0 713.4L841.4 713.4L842.7 714.3L844.1 716.0L845.5 717.8L846.8 720.4L848.2 723.0L849.5 723.8L850.9 723.8L852.2 723.8L853.6 723.8L855.0 723.8L856.3 723.8L857.7 724.7L859.0 726.5L860.4 728.2L861.8 729.9L863.1 730.8L864.5 731.7L865.8 733.4L867.2 734.3L868.5 734.3L869.9 734.3L871.3 734.3L872.6 735.2L874.0 737.8L875.3 740.4L876.7 741.2L878.0 741.2L879.4 741.2L880.8 741.2L882.1 741.2L883.5 742.1L884.8 743.9L886.2 744.7L887.6 745.6L888.9 748.2L890.3 749.9L891.6 749.9L893.0 750.8L894.3 751.7L895.7 752.5L897.1 754.3L898.4 755.2L899.8 755.2L901.1 755.2L902.5 755.2L903.8 756.0L905.2 757.8L906.6 758.6L907.9 759.5L909.3 760.4L910.6 760.4L912.0 761.2L913.4 763.0L914.7 764.7L916.1 765.6L917.4 766.5L918.8 768.2L920.1 769.1L921.5 769.1L922.9 769.1L924.2 769.1L925.6 770.0L926.9 771.7L928.3 772.6L929.7 772.6L931.0 772.6L932.4 773.4L933.7 775.2L935.1 776.0L936.4 776.9L937.8 778.6L939.2 780.4L940.5 782.1L941.9 783.9L943.2 785.6L944.6 786.5L945.9 786.5L947.3 786.5L948.7 786.5L950.0 787.4L951.4 789.1L952.7 790.0L954.1 790.8L955.5 792.6L956.8 793.4L958.2 793.4L959.5 793.4L960.9 793.4L962.2 794.3L963.6 796.0L965.0 796.9L966.3 797.8L967.7 799.5L969.0 800.4L970.4 800.4L971.7 801.3L973.1 803.0L974.5 803.9L975.8 803.9L977.2 804.8L978.5 806.5L979.9 807.4L981.3 807.4L982.6 807.4L984.0 807.4L985.3 808.2L986.7 810.0L988.0 810.8L989.4 811.7L990.8 813.5L992.1 814.3L993.5 814.3L994.8 814.3L996.2 814.3L997.6 814.3L998.9 815.2L1000.3 816.9L1001.6 817.8L1003.0 818.7L1004.3 820.4L1005.7 821.3L1007.1 821.3L1008.4 821.3L1009.8 821.3L1011.1 821.3L1012.5 821.3L1013.8 821.3L1015.2 821.3L1016.6 822.2L1017.9 823.9L1019.3 824.8L1020.6 825.6L1022.0 827.4L1023.4 828.2L1024.7 828.2L1026.1 828.2L1027.4 828.2L1028.8 828.2L1030.1 828.2L1031.5 828.2L1032.9 829.1L1034.2 830.9L1035.6 831.7L1036.9 831.7L1038.3 831.7L1039.6 831.7L1041.0 831.7L1042.4 832.6L1043.7 834.3L1045.1 835.2L1046.4 835.2L1047.8 835.2L1049.2 835.2L1050.5 834.3L1051.9 832.6L1053.2 831.7L1054.6 831.7L1055.9 831.7L1057.3 832.6L1058.7 834.3L1060.0 835.2L1061.4 835.2L1062.7 836.1L1064.1 836.9L1065.5 836.9L1066.8 836.9L1068.2 836.1L1069.5 835.2L1070.9 835.2L1072.2 835.2L1073.6 834.3L1075.0 833.5L1076.3 834.3L1077.7 835.2L1079.0 834.3L1080.4 832.6L1081.7 831.7L1083.1 830.8L1084.5 829.1L1085.8 829.1L1087.2 830.9L1088.5 830.8L1089.9 830.0L1091.3 830.9L1092.6 830.8L1094.0 829.1L1095.3 828.2L1096.7 828.2L1098.0 827.4L1099.4 825.6L1100.8 824.8L1102.1 824.8L1103.5 824.8L1104.8 824.8L1106.2 824.8L1107.5 823.9L1108.9 822.1L1110.3 821.3L1111.6 820.4L1113.0 818.7L1114.3 817.8L1115.7 816.9L1117.1 815.2L1118.4 814.3L1119.8 814.3L1121.1 814.3L1122.5 814.3L1123.8 814.3L1125.2 813.5L1126.6 811.7L1127.9 810.8L1129.3 810.8L1130.6 810.0L1132.0 808.2L1133.4 807.4L1134.7 806.5L1136.1 804.8L1137.4 803.9L1138.8 803.9L1140.1 803.9L1141.5 803.9L1142.9 803.9L1144.2 803.0L1145.6 801.3L1146.9 800.4L1148.3 800.4L1149.6 799.5L1151.0 797.8L1152.4 796.9L1153.7 796.9L1155.1 796.9L1156.4 796.0L1157.8 794.3L1159.2 792.6L1160.5 790.8L1161.9 790.0L1163.2 789.1L1164.6 787.4L1165.9 787.4L1167.3 788.2L1168.7 787.4L1170.0 786.5L1171.4 785.6L1172.7 783.0L1174.1 780.4L1175.4 779.5L1176.8 779.5L1178.2 779.5L1179.5 779.5L1180.9 780.4L1182.2 781.3L1183.6 780.4L1185.0 778.6L1186.3 776.9L1187.7 775.2L1189.0 773.4L1190.4 772.6L1191.7 771.7L1193.1 770.0L1194.5 769.1L1195.8 768.2L1197.2 766.5L1198.5 765.6L1199.9 765.6L1201.3 765.6L1202.6 765.6L1204.0 765.6L1205.3 764.7L1206.7 763.0L1208.0 762.1L1209.4 761.2L1210.8 759.5L1212.1 757.8L1213.5 756.0L1214.8 755.2L1216.2 755.2L1217.5 755.2L1218.9 754.3L1220.3 752.5L1221.6 751.7L1223.0 751.7L1224.3 751.7L1225.7 751.7L1227.1 750.8L1228.4 749.1L1229.8 747.3L1231.1 745.6L1232.5 744.7L1233.8 743.8L1235.2 742.1L1236.6 741.2L1237.9 740.4L1239.3 738.6L1240.6 737.8L1242.0 736.9L1243.3 735.1L1244.7 734.3L1246.1 734.3L1247.4 734.3L1248.8 733.4L1250.1 732.5L1251.5 732.5L1252.9 731.7L1254.2 729.9L1255.6 728.2L1256.9 726.5L1258.3 724.7L1259.6 723.8L1261.0 723.8L1262.4 723.8L1263.7 723.8L1265.1 723.8L1266.4 723.8L1267.8 723.0L1269.2 721.2L1270.5 719.5L1271.9 717.8L1273.2 716.9L1274.6 716.9L1275.9 716.9L1277.3 716.9L1278.7 716.0L1280.0 714.3L1281.4 713.4L1282.7 712.5L1284.1 710.8L1285.4 709.0L1286.8 707.3L1288.2 706.4L1289.5 706.4L1290.9 706.4L1292.2 706.4L1293.6 706.4L1295.0 705.6L1296.3 703.8L1297.7 702.1L1299.0 700.4L1300.4 699.5L1301.7 698.6L1303.1 696.9L1304.5 696.0L1305.8 696.0L1307.2 696.0L1308.5 696.0L1309.9 696.0L1311.2 695.1L1312.6 693.4L1314.0 692.5L1315.3 691.6L1316.7 690.8L1318.0 690.8L1319.4 689.9L1320.8 689.0L1322.1 689.0L1323.5 688.2L1324.8 686.4L1326.2 685.6L1327.5 684.7L1328.9 683.0L1330.3 681.2L1331.6 679.5L1333.0 678.6L1334.3 678.6L1335.7 678.6L1337.1 678.6L1338.4 678.6L1339.8 678.6L1341.1 678.6L1342.5 678.6L1343.8 678.6L1345.2 677.7L1346.6 676.0L1347.9 674.2L1349.3 672.5L1350.6 671.6L1352.0 671.6L1353.3 671.6L1354.7 671.6L1356.1 671.6L1357.4 671.6L1358.8 671.6L1360.1 671.6L1361.5 670.8L1362.9 669.0L1364.2 668.2L1365.6 667.3L1366.9 665.5L1368.3 664.7L1369.6 664.7L1371.0 664.7L1372.4 664.7L1373.7 664.7L1375.1 664.7L1376.4 664.7L1377.8 664.7L1379.1 664.7L1380.5 663.8L1381.9 662.1L1383.2 662.1L1384.6 663.8L1385.9 663.8L1387.3 662.1L1388.7 661.2L1390.0 661.2L1391.4 661.2L1392.7 661.2L1394.1 661.2L1395.4 660.3L1396.8 658.6L1398.2 657.7L1399.5 657.7L1400.9 658.6L1402.2 660.3L1403.6 661.2L1405.0 661.2L1406.3 661.2L1407.7 661.2L1409.0 661.2L1410.4 661.2L1411.7 661.2L1413.1 661.2L1414.5 661.2L1415.8 661.2L1417.2 662.1L1418.5 663.8L1419.9 664.7L1421.2 664.7L1422.6 664.7L1424.0 665.5L1425.3 666.4L1426.7 665.5L1428.0 664.7L1429.4 664.7L1430.8 665.5L1432.1 667.3L1433.5 668.2L1434.8 669.0L1436.2 670.8L1437.5 671.6L1438.9 671.6L1440.3 671.6L1441.6 671.6L1443.0 671.6L1444.3 672.5L1445.7 674.2L1447.0 676.0L1448.4 677.7L1449.8 678.6L1451.1 678.6L1452.5 678.6L1453.8 678.6L1455.2 678.6L1456.6 679.5L1457.9 681.2L1459.3 682.1L1460.6 682.1L1462.0 682.1L1463.3 683.0L1464.7 684.7L1466.1 685.6L1467.4 685.6L1468.8 685.6L1470.1 685.6L1471.5 685.6L1472.9 686.4L1474.2 688.2L1475.6 689.0L1476.9 689.0L1478.3 689.0L1479.6 689.0L1481.0 689.0L1482.4 689.9L1483.7 692.5L1485.1 695.1L1486.4 696.0L1487.8 696.0L1489.1 696.0L1490.5 696.0L1491.9 696.0L1493.2 696.0L1494.6 696.0L1495.9 696.9L1497.3 698.6L1498.7 699.5L1500.0 700.4L1501.4 702.1L1502.7 703.8L1504.1 705.6L1505.4 706.4L1506.8 706.4L1508.2 706.4L1509.5 707.3L1510.9 709.0L1512.2 710.8L1513.6 712.5L1514.9 713.4L1516.3 714.3L1517.7 716.0L1519.0 716.9L1520.4 717.8L1521.7 719.5L1523.1 720.4L1524.5 720.4L1525.8 720.4L1527.2 720.4L1528.5 720.4L1529.9 721.2L1531.2 723.0L1532.6 724.7L1534.0 726.5L1535.3 727.3L1536.7 727.3L1538.0 728.2L1539.4 729.9L1540.8 730.8L1542.1 730.8L1543.5 731.7L1544.8 733.4L1546.2 734.3L1547.5 734.3L1548.9 735.2L1550.3 736.9L1551.6 737.8L1553.0 738.6L1554.3 740.4L1555.7 741.2L1557.0 741.2L1558.4 741.2L1559.8 742.1L1561.1 743.9L1562.5 745.6L1563.8 747.3L1565.2 748.2L1566.6 749.1L1567.9 749.9L1569.3 749.9L1570.6 750.8L1572.0 751.7L1573.3 751.7L1574.7 751.7L1576.1 751.7L1577.4 751.7L1578.8 752.5L1580.1 754.3L1581.5 756.0L1582.8 757.8L1584.2 759.5L1585.6 761.2L1586.9 762.1L1588.3 762.1L1589.6 763.0L1591.0 764.7L1592.4 765.6L1593.7 765.6L1595.1 765.6L1596.4 765.6L1597.8 766.5L1599.1 768.2L1600.5 770.0L1601.9 771.7L1603.2 773.4L1604.6 775.2L1605.9 776.0L1607.3 776.9L1608.7 778.6L1610.0 779.5L1611.4 779.5L1612.7 779.5L1614.1 780.4L1615.4 782.1L1616.8 783.0L1618.2 783.9L1619.5 785.6L1620.9 786.5L1622.2 786.5L1623.6 786.5L1624.9 786.5L1626.3 786.5L1627.7 786.5L1629.0 787.4L1630.4 789.1L1631.7 790.0L1633.1 790.8L1634.5 792.6L1635.8 794.3L1637.2 796.0L1638.5 796.9L1639.9 796.9L1641.2 796.9L1642.6 796.9L1644.0 796.9L1645.3 796.9L1646.7 797.8L1648.0 799.5L1649.4 801.3L1650.7 803.0L1652.1 803.9L1653.5 804.8L1654.8 806.5L1656.2 807.4L1657.5 807.4L1658.9 807.4L1660.3 807.4L1661.6 807.4L1663.0 807.4L1664.3 807.4L1665.7 808.2L1667.0 810.0L1668.4 810.8L1669.8 811.7L1671.1 813.5L1672.5 814.3L1673.8 814.3L1675.2 815.2L1676.6 816.9L1677.9 817.8L1679.3 817.8L1680.6 817.8L1682.0 817.8L1683.3 818.7L1684.7 820.4L1686.1 822.2L1687.4 823.0L1688.8 822.1L1690.1 822.2L1691.5 823.9L1692.8 824.8L1694.2 824.8L1695.6 824.8L1696.9 824.8L1698.3 824.8L1699.6 824.8L1701.0 824.8L1702.4 824.8L1703.7 825.6L1705.1 826.5L1706.4 826.5L1707.8 827.4L1709.1 829.1L1710.5 830.9L1711.0 831.7" stroke="#9ad636" stroke-width="1" fill="none" stroke-linejoin="round"/>
<path d="M13.0 532.4L14.4 531.6L15.7 529.0L17.1 526.4L18.4 525.5L19.8 525.5L21.1 525.5L22.5 525.5L23.9 525.5L25.2 525.5L26.6 525.5L27.9 525.5L29.3 524.6L30.7 522.9L32.0 522.0L33.4 521.1L34.7 520.3L36.1 520.3L37.4 519.4L38.8 517.6L40.2 515.9L41.5 515.0L42.9 515.0L44.2 515.0L45.6 514.2L47.0 511.6L48.3 508.9L49.7 507.2L51.0 505.5L52.4 504.6L53.7 504.6L55.1 504.6L56.5 503.7L57.8 502.0L59.2 501.1L60.5 501.1L61.9 501.1L63.2 501.1L64.6 500.2L66.0 498.5L67.3 496.8L68.7 495.0L70.0 493.3L71.4 491.6L72.8 490.7L74.1 489.8L75.5 487.2L76.8 484.6L78.2 483.7L79.5 482.8L80.9 481.1L82.3 480.2L83.6 479.4L85.0 477.6L86.3 475.9L87.7 474.1L89.0 473.3L90.4 472.4L91.8 470.7L93.1 468.9L94.5 467.2L95.8 466.3L97.2 466.3L98.6 465.4L99.9 463.7L101.3 462.8L102.6 462.0L104.0 460.2L105.3 458.5L106.7 456.8L108.1 455.9L109.4 455.9L110.8 455.0L112.1 453.3L113.5 451.5L114.9 448.9L116.2 445.4L117.6 442.8L118.9 441.1L120.3 439.4L121.6 438.5L123.0 437.6L124.4 435.9L125.7 434.1L127.1 432.4L128.4 431.5L129.8 430.6L131.1 428.9L132.5 428.0L133.9 427.2L135.2 425.4L136.6 423.7L137.9 421.9L139.3 420.2L140.7 418.5L142.0 416.7L143.4 415.0L144.7 414.1L146.1 414.1L147.4 414.1L148.8 413.2L150.2 410.6L151.5 407.2L152.9 403.7L154.2 400.2L155.6 398.5L156.9 398.5L158.3 397.6L159.7 395.8L161.0 394.1L162.4 392.4L163.7 390.6L165.1 389.8L166.5 389.8L167.8 389.8L169.2 388.9L170.5 387.1L171.9 386.3L173.2 385.4L174.6 382.8L176.0 380.2L177.3 378.4L178.7 375.8L180.0 373.2L181.4 371.5L182.8 370.6L184.1 370.6L185.5 368.9L186.8 366.3L188.2 364.5L189.5 362.8L190.9 361.9L192.3 361.1L193.6 359.3L195.0 357.6L196.3 355.0L197.7 352.4L199.0 351.5L200.4 351.5L201.8 351.5L203.1 350.6L204.5 348.0L205.8 345.4L207.2 343.6L208.6 341.9L209.9 340.2L211.3 338.4L212.6 337.6L214.0 337.6L215.3 336.7L216.7 334.9L218.1 334.1L219.4 334.1L220.8 334.1L222.1 333.2L223.5 331.5L224.8 329.7L226.2 328.0L227.6 327.1L228.9 327.1L230.3 326.2L231.6 325.4L233.0 325.4L234.4 324.5L235.7 322.8L237.1 321.0L238.4 320.2L239.8 319.3L241.1 317.6L242.5 316.7L243.9 316.7L245.2 315.8L246.6 314.1L247.9 313.2L249.3 312.3L250.7 310.6L252.0 309.7L253.4 309.7L254.7 308.8L256.1 307.1L257.4 305.4L258.8 303.6L260.2 301.9L261.5 300.1L262.9 299.3L264.2 299.3L265.6 299.3L266.9 300.1L268.3 301.9L269.7 301.9L271.0 300.1L272.4 298.4L273.7 296.7L275.1 294.9L276.5 293.2L277.8 292.3L279.2 292.3L280.5 292.3L281.9 292.3L283.2 292.3L284.6 292.3L286.0 291.4L287.3 289.7L288.7 288.8L290.0 288.8L291.4 288.8L292.7 288.8L294.1 288.0L295.5 286.2L296.8 285.4L298.2 285.4L299.5 285.4L300.9 286.2L302.3 288.0L303.6 288.8L305.0 288.8L306.3 288.0L307.7 286.2L309.0 285.4L310.4 285.4L311.8 285.4L313.1 285.4L314.5 285.4L315.8 285.4L317.2 285.4L318.6 285.4L319.9 285.4L321.3 285.4L322.6 285.4L324.0 285.4L325.3 286.2L326.7 288.0L328.1 288.8L329.4 288.8L330.8 288.8L332.1 288.8L333.5 288.8L334.8 289.7L336.2 291.4L337.6 292.3L338.9 292.3L340.3 292.3L341.6 292.3L343.0 292.3L344.4 292.3L345.7 292.3L347.1 292.3L348.4 293.2L349.8 294.1L351.1 293.2L352.5 293.2L353.9 294.9L355.2 295.8L356.6 296.7L357.9 298.4L359.3 299.3L360.6 300.1L362.0 301.9L363.4 302.8L364.7 302.8L366.1 302.8L367.4 302.8L368.8 302.8L370.2 303.6L371.5 305.4L372.9 306.2L374.2 306.2L375.6 307.1L376.9 308.8L378.3 309.7L379.7 308.8L381.0 308.0L382.4 308.8L383.7 309.7L385.1 310.6L386.5 313.2L387.8 315.8L389.2 316.7L390.5 316.7L391.9 316.7L393.2 316.7L394.6 317.6L396.0 319.3L397.3 321.0L398.7 323.6L400.0 325.4L401.4 324.5L402.7 323.6L404.1 323.6L405.5 323.6L406.8 324.5L408.2 326.2L409.5 328.0L410.9 329.7L412.3 330.6L413.6 331.5L415.0 334.1L416.3 336.7L417.7 338.4L419.0 340.2L420.4 341.0L421.8 341.9L423.1 343.6L424.5 344.5L425.8 345.4L427.2 348.0L428.5 350.6L429.9 351.5L431.3 351.5L432.6 351.5L434.0 351.5L435.3 352.4L436.7 354.1L438.1 355.0L439.4 355.8L440.8 358.4L442.1 361.1L443.5 363.7L444.8 367.1L446.2 369.8L447.6 371.5L448.9 372.4L450.3 372.4L451.6 373.2L453.0 375.0L454.4 375.8L455.7 375.8L457.1 376.7L458.4 378.4L459.8 380.2L461.1 382.8L462.5 385.4L463.9 386.3L465.2 387.1L466.6 389.8L467.9 392.4L469.3 394.1L470.6 395.8L472.0 397.6L473.4 399.3L474.7 400.2L476.1 401.1L477.4 403.7L478.8 406.3L480.2 407.2L481.5 408.0L482.9 409.8L484.2 410.6L485.6 411.5L486.9 414.1L488.3 416.7L489.7 417.6L491.0 417.6L492.4 417.6L493.7 418.5L495.1 420.2L496.4 421.9L497.8 424.6L499.2 427.2L500.5 428.0L501.9 428.9L503.2 431.5L504.6 434.1L506.0 435.9L507.3 437.6L508.7 439.4L510.0 441.1L511.4 442.8L512.7 444.6L514.1 445.4L515.5 445.4L516.8 446.3L518.2 448.9L519.5 452.4L520.9 455.0L522.3 456.8L523.6 457.6L525.0 457.6L526.3 458.5L527.7 459.4L529.0 460.2L530.4 462.0L531.8 463.7L533.1 465.4L534.5 466.3L535.8 467.2L537.2 468.9L538.5 469.8L539.9 470.7L541.3 472.4L542.6 474.1L544.0 475.9L545.3 477.6L546.7 480.2L548.1 482.8L549.4 484.6L550.8 486.3L552.1 488.1L553.5 489.8L554.8 490.7L556.2 490.7L557.6 490.7L558.9 491.6L560.3 493.3L561.6 494.2L563.0 495.0L564.3 496.8L565.7 497.6L567.1 497.6L568.4 498.5L569.8 500.2L571.1 501.1L572.5 502.0L573.9 503.7L575.2 505.5L576.6 507.2L577.9 508.1L579.3 508.9L580.6 510.7L582.0 510.7L583.4 509.8L584.7 510.7L586.1 511.6L587.4 511.6L588.8 512.4L590.2 514.2L591.5 515.0L592.9 515.0L594.2 515.9L595.6 517.6L596.9 518.5L598.3 518.5L599.7 518.5L601.0 518.5L602.4 519.4L603.7 521.1L605.1 522.0L606.4 522.0L607.8 522.9L609.2 524.6L610.5 525.5L611.9 525.5L613.2 526.4L614.6 528.1L616.0 529.0L617.3 529.8L618.7 531.6L620.0 532.4L621.4 532.4L622.7 532.4L624.1 532.4L625.5 532.4L626.8 532.4L628.2 532.4L629.5 533.3L630.9 535.0L632.2 536.8L633.6 538.5L635.0 539.4L636.3 538.5L637.7 536.8L639.0 535.0L640.4 533.3L641.8 533.3L643.1 535.0L644.5 535.9L645.8 535.9L647.2 535.9L648.5 535.9L649.9 535.9L651.3 535.9L652.6 535.9L654.0 535.9L655.3 535.9L656.7 535.9L658.1 535.9L659.4 535.9L660.8 535.9L662.1 535.9L663.5 535.9L664.8 536.8L666.2 538.5L667.6 539.4L668.9 539.4L670.3 539.4L671.6 539.4L673.0 538.5L674.3 536.8L675.7 535.9L677.1 535.9L678.4 535.9L679.8 535.9L681.1 535.9L682.5 535.9L683.9 535.9L685.2 535.0L686.6 533.3L687.9 532.4L689.3 531.6L690.6 529.8L692.0 529.0L693.4 529.0L694.7 529.0L696.1 529.0L697.4 529.0L698.8 529.0L700.1 528.1L701.5 526.4L702.9 524.6L704.2 522.9L705.6 522.0L706.9 522.0L708.3 522.0L709.7 522.0L711.0 522.0L712.4 522.0L713.7 522.0L715.1 521.1L716.4 519.4L717.8 517.6L719.2 515.9L720.5 514.2L721.9 512.4L723.2 511.6L724.6 511.6L726.0 511.6L727.3 511.6L728.7 511.6L730.0 510.7L731.4 508.9L732.7 507.2L734.1 505.5L735.5 504.6L736.8 504.6L738.2 503.7L739.5 502.0L740.9 500.2L742.2 498.5L743.6 497.6L745.0 496.8L746.3 495.0L747.7 493.3L749.0 491.6L750.4 490.7L751.8 490.7L753.1 490.7L754.5 489.8L755.8 488.1L757.2 487.2L758.5 486.3L759.9 483.7L761.3 480.2L762.6 477.6L764.0 475.9L765.3 474.1L766.7 473.3L768.0 473.3L769.4 473.3L770.8 472.4L772.1 470.7L773.5 469.8L774.8 468.9L776.2 467.2L777.6 466.3L778.9 465.4L780.3 463.7L781.6 462.8L783.0 462.0L784.3 459.4L785.7 456.8L787.1 455.0L788.4 453.3L789.8 452.4L791.1 451.5L792.5 449.8L793.9 448.1L795.2 446.3L796.6 445.4L797.9 444.6L799.3 442.8L800.6 442.0L802.0 441.1L803.4 439.4L804.7 437.6L806.1 435.9L807.4 434.1L808.8 432.4L810.1 430.6L811.5 428.9L812.9 427.2L814.2 424.6L815.6 421.9L816.9 421.1L818.3 420.2L819.7 418.5L821.0 417.6L822.4 416.7L823.7 414.1L825.1 411.5L826.4 409.8L827.8 408.0L829.2 407.2L830.5 407.2L831.9 406.3L833.2 404.6L834.6 404.6L835.9 404.6L837.3 401.9L838.7 399.3L840.0 396.7L841.4 393.2L842.7 390.6L844.1 388.9L845.5 387.1L846.8 385.4L848.2 383.7L849.5 382.8L850.9 382.8L852.2 381.9L853.6 380.2L855.0 379.3L856.3 378.4L857.7 376.7L859.0 375.8L860.4 375.0L861.8 373.2L863.1 371.5L864.5 369.8L865.8 368.0L867.2 365.4L868.5 362.8L869.9 361.1L871.3 359.3L872.6 358.4L874.0 357.6L875.3 355.8L876.7 355.0L878.0 354.1L879.4 351.5L880.8 348.9L882.1 347.1L883.5 345.4L884.8 344.5L886.2 343.6L887.6 341.9L888.9 341.0L890.3 341.0L891.6 341.0L893.0 341.0L894.3 340.2L895.7 337.6L897.1 334.1L898.4 331.5L899.8 329.7L901.1 328.0L902.5 327.1L903.8 327.1L905.2 327.1L906.6 327.1L907.9 326.2L909.3 324.5L910.6 323.6L912.0 323.6L913.4 323.6L914.7 323.6L916.1 323.6L917.4 322.8L918.8 321.0L920.1 320.2L921.5 319.3L922.9 316.7L924.2 314.1L925.6 313.2L926.9 312.3L928.3 310.6L929.7 308.8L931.0 307.1L932.4 306.2L933.7 306.2L935.1 306.2L936.4 306.2L937.8 305.4L939.2 303.6L940.5 302.8L941.9 302.8L943.2 301.9L944.6 300.1L945.9 299.3L947.3 298.4L948.7 296.7L950.0 295.8L951.4 295.8L952.7 295.8L954.1 295.8L955.5 295.8L956.8 294.9L958.2 293.2L959.5 291.4L960.9 290.6L962.2 291.4L963.6 291.4L965.0 289.7L966.3 288.8L967.7 288.8L969.0 288.8L970.4 288.8L971.7 288.8L973.1 288.8L974.5 288.8L975.8 288.8L977.2 288.8L978.5 288.8L979.9 288.8L981.3 288.8L982.6 288.0L984.0 286.2L985.3 285.4L986.7 285.4L988.0 285.4L989.4 285.4L990.8 285.4L992.1 285.4L993.5 286.2L994.8 287.1L996.2 286.2L997.6 285.4L998.9 285.4L1000.3 285.4L1001.6 286.2L1003.0 288.0L1004.3 288.8L1005.7 288.0L1007.1 287.1L1008.4 288.0L1009.8 288.8L1011.1 288.8L1012.5 288.8L1013.8 288.8L1015.2 288.0L1016.6 286.2L1017.9 285.4L1019.3 286.2L1020.6 288.0L1022.0 289.7L1023.4 291.4L1024.7 292.3L1026.1 292.3L1027.4 292.3L1028.8 292.3L1030.1 292.3L1031.5 292.3L1032.9 293.2L1034.2 294.9L1035.6 295.8L1036.9 296.7L1038.3 298.4L1039.6 299.3L1041.0 298.4L1042.4 296.7L1043.7 296.7L1045.1 298.4L1046.4 300.1L1047.8 301.9L1049.2 302.8L1050.5 302.8L1051.9 302.8L1053.2 302.8L1054.6 303.6L1055.9 305.4L1057.3 307.1L1058.7 308.8L1060.0 309.7L1061.4 309.7L1062.7 309.7L1064.1 309.7L1065.5 310.6L1066.8 313.2L1068.2 315.8L1069.5 316.7L1070.9 316.7L1072.2 317.6L1073.6 319.3L1075.0 320.2L1076.3 320.2L1077.7 320.2L1079.0 319.3L1080.4 318.4L1081.7 319.3L1083.1 321.0L1084.5 323.6L1085.8 327.1L1087.2 329.7L1088.5 331.5L1089.9 333.2L1091.3 334.1L1092.6 334.9L1094.0 336.7L1095.3 338.4L1096.7 340.2L1098.0 341.0L1099.4 341.0L1100.8 341.0L1102.1 341.9L1103.5 343.6L1104.8 344.5L1106.2 345.4L1107.5 347.1L1108.9 348.9L1110.3 350.6L1111.6 352.4L1113.0 355.0L1114.3 358.4L1115.7 361.1L1117.1 361.9L1118.4 362.8L1119.8 364.5L1121.1 365.4L1122.5 365.4L1123.8 365.4L1125.2 365.4L1126.6 365.4L1127.9 366.3L1129.3 368.9L1130.6 371.5L1132.0 373.2L1133.4 375.0L1134.7 375.8L1136.1 375.8L1137.4 375.8L1138.8 376.7L1140.1 379.3L1141.5 381.9L1142.9 383.7L1144.2 386.3L1145.6 389.8L1146.9 393.2L1148.3 395.8L1149.6 396.7L1151.0 396.7L1152.4 397.6L1153.7 399.3L1155.1 400.2L1156.4 400.2L1157.8 401.1L1159.2 402.8L1160.5 404.6L1161.9 406.3L1163.2 408.0L1164.6 409.8L1165.9 411.5L1167.3 413.2L1168.7 415.0L1170.0 417.6L1171.4 420.2L1172.7 421.1L1174.1 421.1L1175.4 421.9L1176.8 423.7L1178.2 425.4L1179.5 428.0L1180.9 430.6L1182.2 432.4L1183.6 434.1L1185.0 435.0L1186.3 435.9L1187.7 437.6L1189.0 439.4L1190.4 441.1L1191.7 442.0L1193.1 442.8L1194.5 444.6L1195.8 446.3L1197.2 448.1L1198.5 449.8L1199.9 451.5L1201.3 452.4L1202.6 453.3L1204.0 455.0L1205.3 455.9L1206.7 455.9L1208.0 457.6L1209.4 461.1L1210.8 463.7L1212.1 466.3L1213.5 468.9L1214.8 470.7L1216.2 472.4L1217.5 474.1L1218.9 475.9L1220.3 476.8L1221.6 476.8L1223.0 477.6L1224.3 478.5L1225.7 477.6L1227.1 477.6L1228.4 479.4L1229.8 480.2L1231.1 481.1L1232.5 483.7L1233.8 486.3L1235.2 488.1L1236.6 489.8L1237.9 490.7L1239.3 490.7L1240.6 491.6L1242.0 494.2L1243.3 496.8L1244.7 497.6L1246.1 498.5L1247.4 500.2L1248.8 500.2L1250.1 498.5L1251.5 497.6L1252.9 497.6L1254.2 498.5L1255.6 501.1L1256.9 503.7L1258.3 505.5L1259.6 507.2L1261.0 508.1L1262.4 508.1L1263.7 508.9L1265.1 510.7L1266.4 511.6L1267.8 512.4L1269.2 515.0L1270.5 517.6L1271.9 518.5L1273.2 519.4L1274.6 521.1L1275.9 522.0L1277.3 522.0L1278.7 522.0L1280.0 522.0L1281.4 522.0L1282.7 522.9L1284.1 524.6L1285.4 525.5L1286.8 525.5L1288.2 525.5L1289.5 525.5L1290.9 526.4L1292.2 528.1L1293.6 529.0L1295.0 528.1L1296.3 527.2L1297.7 528.1L1299.0 529.0L1300.4 529.8L1301.7 531.6L1303.1 532.4L1304.5 533.3L1305.8 535.0L1307.2 535.9L1308.5 535.9L1309.9 535.9L1311.2 535.9L1312.6 535.9L1314.0 536.8L1315.3 538.5L1316.7 538.5L1318.0 536.8L1319.4 535.9L1320.8 535.9L1322.1 535.9L1323.5 535.9L1324.8 535.9L1326.2 536.8L1327.5 538.5L1328.9 538.5L1330.3 537.7L1331.6 538.5L1333.0 539.4L1334.3 539.4L1335.7 539.4L1337.1 539.4L1338.4 538.5L1339.8 536.8L1341.1 535.9L1342.5 535.9L1343.8 535.9L1345.2 535.9L1346.6 535.9L1347.9 535.9L1349.3 536.8L1350.6 538.5L1352.0 538.5L1353.3 535.9L1354.7 533.3L1356.1 532.4L1357.4 531.6L1358.8 529.8L1360.1 529.0L1361.5 529.0L1362.9 529.0L1364.2 529.0L1365.6 529.8L1366.9 530.7L1368.3 529.8L1369.6 529.0L1371.0 529.0L1372.4 529.0L1373.7 529.0L1375.1 529.0L1376.4 529.0L1377.8 529.0L1379.1 528.1L1380.5 526.4L1381.9 524.6L1383.2 522.9L1384.6 522.0L1385.9 522.0L1387.3 522.0L1388.7 522.0L1390.0 522.0L1391.4 521.1L1392.7 519.4L1394.1 518.5L1395.4 517.6L1396.8 515.9L1398.2 514.2L1399.5 512.4L1400.9 511.6L1402.2 511.6L1403.6 511.6L1405.0 511.6L1406.3 511.6L1407.7 511.6L1409.0 511.6L1410.4 510.7L1411.7 508.9L1413.1 507.2L1414.5 505.5L1415.8 503.7L1417.2 502.0L1418.5 500.2L1419.9 497.6L1421.2 495.0L1422.6 494.2L1424.0 494.2L1425.3 494.2L1426.7 494.2L1428.0 494.2L1429.4 493.3L1430.8 490.7L1432.1 488.9L1433.5 488.9L1434.8 488.1L1436.2 487.2L1437.5 487.2L1438.9 486.3L1440.3 484.6L1441.6 482.8L1443.0 480.2L1444.3 477.6L1445.7 475.9L1447.0 474.1L1448.4 473.3L1449.8 473.3L1451.1 472.4L1452.5 470.7L1453.8 469.8L1455.2 468.9L1456.6 466.3L1457.9 462.8L1459.3 459.4L1460.6 456.8L1462.0 455.9L1463.3 455.9L1464.7 455.9L1466.1 455.9L1467.4 455.0L1468.8 453.3L1470.1 452.4L1471.5 452.4L1472.9 451.5L1474.2 449.8L1475.6 448.1L1476.9 445.4L1478.3 442.8L1479.6 441.1L1481.0 439.4L1482.4 437.6L1483.7 435.9L1485.1 435.0L1486.4 435.0L1487.8 434.1L1489.1 432.4L1490.5 430.6L1491.9 428.0L1493.2 425.4L1494.6 423.7L1495.9 421.1L1497.3 418.5L1498.7 416.7L1500.0 415.0L1501.4 413.2L1502.7 412.4L1504.1 412.4L1505.4 410.6L1506.8 408.0L1508.2 407.2L1509.5 407.2L1510.9 407.2L1512.2 406.3L1513.6 404.6L1514.9 402.8L1516.3 400.2L1517.7 397.6L1519.0 395.8L1520.4 394.1L1521.7 393.2L1523.1 393.2L1524.5 392.4L1525.8 390.6L1527.2 388.9L1528.5 386.3L1529.9 382.8L1531.2 380.2L1532.6 378.4L1534.0 376.7L1535.3 375.0L1536.7 373.2L1538.0 371.5L1539.4 369.8L1540.8 368.9L1542.1 368.9L1543.5 368.9L1544.8 368.0L1546.2 365.4L1547.5 362.8L1548.9 361.9L1550.3 361.9L1551.6 361.9L1553.0 361.9L1554.3 361.1L1555.7 358.4L1557.0 355.0L1558.4 351.5L1559.8 348.9L1561.1 348.0L1562.5 348.0L1563.8 347.1L1565.2 345.4L1566.6 343.6L1567.9 341.0L1569.3 338.4L1570.6 337.6L1572.0 337.6L1573.3 337.6L1574.7 336.7L1576.1 335.8L1577.4 335.8L1578.8 334.9L1580.1 333.2L1581.5 331.5L1582.8 329.7L1584.2 328.0L1585.6 327.1L1586.9 327.1L1588.3 327.1L1589.6 326.2L1591.0 323.6L1592.4 321.0L1593.7 320.2L1595.1 319.3L1596.4 317.6L1597.8 316.7L1599.1 316.7L1600.5 315.8L1601.9 314.1L1603.2 313.2L1604.6 312.3L1605.9 310.6L1607.3 309.7L1608.7 309.7L1610.0 308.8L1611.4 307.1L1612.7 306.2L1614.1 305.4L1615.4 303.6L1616.8 301.9L1618.2 300.1L1619.5 299.3L1620.9 299.3L1622.2 299.3L1623.6 300.1L1624.9 301.9L1626.3 302.8L1627.7 302.8L1629.0 302.8L1630.4 302.8L1631.7 301.9L1633.1 300.1L1634.5 299.3L1635.8 298.4L1637.2 296.7L1638.5 295.8L1639.9 295.8L1641.2 294.9L1642.6 293.2L1644.0 292.3L1645.3 292.3L1646.7 291.4L1648.0 290.6L1649.4 290.6L1650.7 290.6L1652.1 291.4L1653.5 292.3L1654.8 291.4L1656.2 289.7L1657.5 288.8L1658.9 288.0L1660.3 286.2L1661.6 286.2L1663.0 288.0L1664.3 288.0L1665.7 286.2L1667.0 285.4L1668.4 285.4L1669.8 285.4L1671.1 285.4L1672.5 285.4L1673.8 285.4L1675.2 285.4L1676.6 285.4L1677.9 285.4L1679.3 285.4L1680.6 285.4L1682.0 285.4L1683.3 286.2L1684.7 288.0L1686.1 288.8L1687.4 288.8L1688.8 288.8L1690.1 289.7L1691.5 291.4L1692.8 292.3L1694.2 292.3L1695.6 292.3L1696.9 291.4L1698.3 289.7L1699.6 288.8L1701.0 289.7L1702.4 291.4L1703.7 292.3L1705.1 292.3L1706.4 292.3L1707.8 292.3L1709.1 292.3L1710.5 292.3L1711.0 292.3" stroke="#ff3a5e" stroke-width="1" fill="none" stroke-linejoin="round"/>
<!-- zoom overview bar -->
<line x1="580" y1="60.1" x2="1144" y2="60.1" stroke="#262626" stroke-width="4.4"/>
<line x1="580" y1="60.1" x2="1144" y2="60.1" stroke="#bebebe" stroke-width="2.4"/>
<path d="M586 51.7H579.7V67.6H586M1138 51.7H1144.3V67.6H1138" stroke="#ececec" stroke-width="1.4" fill="none"/>
<!-- trigger position markers -->
<path d="M853.8 46H869.6L861.7 51.3Z" fill="#f7941d"/>
<path d="M855.6 58.4H868.3V70.2H864.6L862 73.9L859.4 70.2H855.6Z" fill="#000" stroke="#e88a1e" stroke-width="1.4"/>
<path d="M851.8 75H872.2L862 84.6Z" fill="#f7941d"/>
<path d="M853 86H871V105.8H866L862 112.2L858 105.8H853Z" fill="#000" stroke="#f7941d" stroke-width="2"/>
<!-- corner zoom icon -->
<path d="M1663 82.8H1701Q1704.3 82.8 1704.3 86V123.8Z" fill="#4d4d4d"/>
<circle cx="1695.8" cy="90.6" r="5.2" fill="none" stroke="#ababab" stroke-width="1.8"/>
<line x1="1691.5" y1="94.8" x2="1684.6" y2="101.3" stroke="#ababab" stroke-width="3" stroke-linecap="round"/>
<!-- channel markers -->
<path d="M19 399.2H42.4Q43.6 399.2 44.5 400.1L57.3 412.4Q57.9 413.2 57.3 414L44.5 426.9Q43.6 427.8 42.4 427.8H19Q17.1 427.8 17.1 425.9V401.1Q17.1 399.2 19 399.2Z" fill="#e9435f"/>
<path d="M19.2 731.9H42.6Q44.4 731.9 45.6 733L57.5 745.3Q58.7 746.6 57.5 747.9L45.6 760.2Q44.4 761.3 42.6 761.3H19.2Q17 761.3 17 759.1V734.1Q17 731.9 19.2 731.9Z" fill="#10160a" stroke="#79bb2b" stroke-width="1.25"/>
<!-- trigger level arrow -->
<path d="M1689.2 369.5L1702.2 359.2Q1703.2 358.6 1703.2 360V367.5H1711V371.5H1703.2V379Q1703.2 380.4 1702.2 379.8Z" fill="#e9405f"/>
<!-- splitter handle -->
<circle cx="1722.9" cy="496.9" r="2.2" fill="#d2d2d2"/><circle cx="1722.9" cy="505.1" r="2.2" fill="#d2d2d2"/><circle cx="1722.9" cy="513.3" r="2.2" fill="#d2d2d2"/>
<!-- zoom box icon -->
<g stroke="#c9c9c9" fill="none">
<path d="M1765.3 255.1H1768.8M1771.4 255.1H1776.1M1778.8 255.1H1783.5M1786 255.1H1788.9M1765.3 273.8H1768.8M1771.4 273.8H1776.1M1778.8 273.8H1783.0" stroke-width="2"/>
<path d="M1766.3 254.1V257.3M1766.3 259.8V263.0M1766.3 265.8V269.0M1766.3 271.6V274.8M1787.9 254.1V257.3M1787.9 259.8V263.0M1787.9 265.8V268.4" stroke-width="2"/>
<circle cx="1779.1" cy="262.9" r="4.4" stroke-width="1.5"/>
<line x1="1775.6" y1="266.4" x2="1771" y2="269.3" stroke-width="2.6" stroke-linecap="round"/>
</g>
<path d="M1782.9 269.1L1791.8 273L1788.3 274.3L1791.5 277.7L1789.8 279.1L1786.7 275.7L1785 278.8Z" fill="#c9c9c9"/>
<!-- coupling / slope / T icons -->
<path d="M76 1032.6C77.6 1025.4 80.8 1025.2 82.7 1033S87.6 1041 89.5 1033.2" stroke="#303030" stroke-width="1.6" fill="none" stroke-linecap="round"/>
<path d="M1440.4 1019.1H1446L1453 1007.5H1459" stroke="#4b4b8d" stroke-width="1.4" fill="none"/>
<path d="M1275.6 1049.6H1285.2V1059.6H1282.4L1280.4 1063.4L1278.4 1059.6H1275.6Z" fill="#000" stroke="#f7941d" stroke-width="1.3"/>
<!-- logo accent -->
<path d="M1827.2 9H1831.3L1819.1 25.9H1814.9Z" fill="#20badf"/>

</svg>
<div class="a" id="labels" style="left:0;top:0;width:1920px;height:1080px;will-change:transform">
<div class="t" style="left:32.75px;top:6px;font-size:19.0px;color:#f2f2f2;">File</div>
<div class="t" style="left:111.50px;top:6px;font-size:19.0px;color:#f2f2f2;letter-spacing:0.31px;">Edit</div>
<div class="t" style="left:194.40px;top:6px;font-size:19.0px;color:#f2f2f2;letter-spacing:1.03px;">Utility</div>
<div class="t" style="left:296.20px;top:6px;font-size:19.0px;color:#f2f2f2;letter-spacing:0.76px;">Help</div>
<div class="t" style="left:28.10px;top:50px;font-size:18.5px;color:#f2f2f2;letter-spacing:1.04px;">Waveform View</div>
<div class="t" style="left:1772.00px;top:45px;font-size:18.5px;color:#f2f2f2;letter-spacing:0.64px;font-weight:bold;-webkit-text-stroke:0.35px #f2f2f2;">Add New...</div>
<div class="t" style="left:1747.80px;top:84px;font-size:18.0px;color:#f2f2f2;letter-spacing:-0.52px;">Cursors</div>
<div class="t" style="left:1835.00px;top:84px;font-size:18.0px;color:#f2f2f2;letter-spacing:0.55px;">Callout</div>
<div class="t" style="left:1741.20px;top:140px;font-size:18.5px;color:#f2f2f2;letter-spacing:-0.01px;">Measure</div>
<div class="t" style="left:1837.20px;top:140px;font-size:18.0px;color:#f2f2f2;letter-spacing:-0.42px;">Search</div>
<div class="t" style="left:1748.40px;top:186px;font-size:18.0px;color:#f2f2f2;letter-spacing:-0.34px;">Results</div>
<div class="t" style="left:1756.10px;top:204px;font-size:18.0px;color:#f2f2f2;letter-spacing:0.07px;">Table</div>
<div class="t" style="left:1847.30px;top:194px;font-size:18.5px;color:#f2f2f2;letter-spacing:0.52px;">Plot</div>
<div class="t" style="left:1834.50px;top:256px;font-size:18.0px;color:#f2f2f2;letter-spacing:0.63px;">More...</div>
<div class="t" style="left:1740.70px;top:314px;font-size:17.5px;color:#f2f2f2;letter-spacing:0.29px;">Meas 9</div>
<div class="t" style="left:1883.40px;top:319px;font-size:10.5px;color:#f2f2f2;">3</div>
<div class="t" style="left:1740.40px;top:337px;font-size:17.0px;color:#0a0a0a;letter-spacing:-0.39px;">Frequency</div>
<div class="t" style="left:1740.70px;top:359px;font-size:17.0px;color:#0a0a0a;letter-spacing:0.57px;">µ&#x27;: 25.00 MHz</div>
<div class="t" style="left:1740.70px;top:390px;font-size:17.5px;color:#8fd32e;letter-spacing:0.19px;">Meas 10</div>
<div class="t" style="left:1883.70px;top:395px;font-size:10.5px;color:#10200a;">4</div>
<div class="t" style="left:1740.40px;top:413px;font-size:17.0px;color:#0a0a0a;letter-spacing:-0.39px;">Frequency</div>
<div class="t" style="left:1740.70px;top:435px;font-size:17.0px;color:#0a0a0a;letter-spacing:0.57px;">µ&#x27;: 25.07 MHz</div>
<div class="t" style="left:19.50px;top:981px;font-size:17.5px;color:#f2f2f2;letter-spacing:-0.28px;">Ch 3</div>
<div class="t" style="left:20.10px;top:1004px;font-size:17.5px;color:#0a0a0a;letter-spacing:-0.46px;">1 V/div</div>
<div class="t" style="left:20.00px;top:1027px;font-size:17.5px;color:#0a0a0a;letter-spacing:0.08px;">1 MΩ</div>
<div class="t" style="left:19.90px;top:1048px;font-size:17.5px;color:#0a0a0a;letter-spacing:0.01px;">500 MHz</div>
<div class="t" style="left:98.00px;top:1047px;font-size:11.0px;color:#0a0a0a;font-weight:bold;">B</div>
<div class="t" style="left:104.97px;top:1052px;font-size:9.5px;color:#0a0a0a;font-weight:bold;">w</div>
<div class="t" style="left:133.25px;top:981px;font-size:17.5px;color:#8fd32e;letter-spacing:-0.61px;">Ch 4</div>
<div class="t" style="left:133.60px;top:1004px;font-size:17.5px;color:#0a0a0a;letter-spacing:-0.31px;">2 V/div</div>
<div class="t" style="left:133.75px;top:1027px;font-size:17.5px;color:#0a0a0a;letter-spacing:0.08px;">1 MΩ</div>
<div class="t" style="left:133.65px;top:1048px;font-size:17.5px;color:#0a0a0a;letter-spacing:0.01px;">500 MHz</div>
<div class="t" style="left:211.75px;top:1047px;font-size:11.0px;color:#0a0a0a;font-weight:bold;">B</div>
<div class="t" style="left:218.72px;top:1052px;font-size:9.5px;color:#0a0a0a;font-weight:bold;">w</div>
<div class="t" style="left:777.35px;top:1012px;font-size:24.0px;color:#f2f2f2;">1</div>
<div class="t" style="left:831.55px;top:1012px;font-size:24.0px;color:#f2f2f2;">2</div>
<div class="t" style="left:896.10px;top:997px;font-size:18.0px;color:#f2f2f2;letter-spacing:0.34px;">Add</div>
<div class="t" style="left:894.60px;top:1017px;font-size:17.5px;color:#f2f2f2;letter-spacing:-0.59px;">New</div>
<div class="t" style="left:950.10px;top:997px;font-size:18.0px;color:#f2f2f2;letter-spacing:0.34px;">Add</div>
<div class="t" style="left:948.60px;top:1017px;font-size:17.5px;color:#f2f2f2;letter-spacing:-0.59px;">New</div>
<div class="t" style="left:1004.10px;top:997px;font-size:18.0px;color:#f2f2f2;letter-spacing:0.34px;">Add</div>
<div class="t" style="left:1002.60px;top:1017px;font-size:17.5px;color:#f2f2f2;letter-spacing:-0.59px;">New</div>
<div class="t" style="left:891.60px;top:1035px;font-size:18.0px;color:#f2f2f2;letter-spacing:0.23px;">Math</div>
<div class="t" style="left:953.20px;top:1036px;font-size:17.0px;color:#f2f2f2;letter-spacing:-0.92px;">Ref</div>
<div class="t" style="left:1006.30px;top:1036px;font-size:17.0px;color:#f2f2f2;letter-spacing:-0.90px;">Bus</div>
<div class="t" style="left:1073.00px;top:1016px;font-size:18.0px;color:#f2f2f2;letter-spacing:-0.05px;">DVM</div>
<div class="t" style="left:1149.00px;top:981px;font-size:18.5px;color:#f2f2f2;letter-spacing:0.61px;">Horizontal</div>
<div class="t" style="left:1149.40px;top:1004px;font-size:17.5px;color:#0a0a0a;letter-spacing:-0.45px;">10 ns/div</div>
<div class="t" style="left:1276.30px;top:1004px;font-size:17.5px;color:#0a0a0a;letter-spacing:-0.58px;">100 ns</div>
<div class="t" style="left:1149.00px;top:1026px;font-size:17.0px;color:#0a0a0a;letter-spacing:-0.60px;">SR: 12.5 GS/s</div>
<div class="t" style="left:1275.80px;top:1026px;font-size:17.5px;color:#0a0a0a;letter-spacing:-0.34px;">80 ps/pt (IT)</div>
<div class="t" style="left:1148.00px;top:1048px;font-size:17.5px;color:#0a0a0a;letter-spacing:-0.36px;">RL: 1.25 kpts</div>
<div class="t" style="left:1291.90px;top:1048px;font-size:17.5px;color:#0a0a0a;letter-spacing:0.22px;">50%</div>
<div class="t" style="left:1395.25px;top:982px;font-size:17.5px;color:#f2f2f2;letter-spacing:0.63px;">Trigger</div>
<div class="t" style="left:1407.22px;top:1003px;font-size:17.5px;color:#f2f2f2;">3</div>
<div class="t" style="left:1469.20px;top:1004px;font-size:17.5px;color:#0a0a0a;letter-spacing:-0.11px;">480 mV</div>
<div class="t" style="left:1393.40px;top:1027px;font-size:17.5px;color:#0a0a0a;letter-spacing:-0.56px;">Noise Reject</div>
<div class="t" style="left:1593.30px;top:981px;font-size:18.0px;color:#f2f2f2;letter-spacing:0.67px;">Acquisition</div>
<div class="t" style="left:1592.50px;top:1004px;font-size:17.5px;color:#0a0a0a;letter-spacing:0.28px;">Auto,</div>
<div class="t" style="left:1686.50px;top:1004px;font-size:17.5px;color:#0a0a0a;letter-spacing:-0.44px;">Analyze</div>
<div class="t" style="left:1592.50px;top:1027px;font-size:17.5px;color:#0a0a0a;letter-spacing:-0.33px;">Sample: 8 bits</div>
<div class="t" style="left:1592.50px;top:1049px;font-size:17.5px;color:#0a0a0a;letter-spacing:-0.35px;">151 Acqs</div>
<div class="t" style="left:1807.70px;top:988px;font-size:16.5px;color:#ffffff;letter-spacing:0.54px;font-weight:bold;-webkit-text-stroke:0.35px #fff;">Triggered</div>
<div class="t" style="left:163.50px;top:947px;font-size:13.5px;color:#b4b4b4;letter-spacing:0.09px;-webkit-text-stroke:0.45px #b4b4b4;">-40 ns</div>
<div class="t" style="left:334.00px;top:947px;font-size:13.5px;color:#b4b4b4;letter-spacing:-0.05px;-webkit-text-stroke:0.45px #b4b4b4;">-30 ns</div>
<div class="t" style="left:504.20px;top:947px;font-size:13.5px;color:#b4b4b4;letter-spacing:-0.01px;-webkit-text-stroke:0.45px #b4b4b4;">-20 ns</div>
<div class="t" style="left:674.00px;top:947px;font-size:13.5px;color:#b4b4b4;letter-spacing:-0.01px;-webkit-text-stroke:0.45px #b4b4b4;">-10 ns</div>
<div class="t" style="left:853.60px;top:947px;font-size:13.5px;color:#b4b4b4;letter-spacing:-0.53px;-webkit-text-stroke:0.45px #b4b4b4;">0 s</div>
<div class="t" style="left:1016.00px;top:947px;font-size:13.5px;color:#b4b4b4;letter-spacing:-0.12px;-webkit-text-stroke:0.45px #b4b4b4;">10 ns</div>
<div class="t" style="left:1186.00px;top:947px;font-size:13.5px;color:#b4b4b4;-webkit-text-stroke:0.45px #b4b4b4;">20 ns</div>
<div class="t" style="left:1355.80px;top:947px;font-size:13.5px;color:#b4b4b4;-webkit-text-stroke:0.45px #b4b4b4;">30 ns</div>
<div class="t" style="left:1525.60px;top:947px;font-size:13.5px;color:#b4b4b4;-webkit-text-stroke:0.45px #b4b4b4;">40 ns</div>
<div class="t" style="left:857.15px;top:88px;font-size:15.0px;color:#f7941d;font-weight:bold;">T</div>
<div class="t" style="left:859.30px;top:60px;font-size:9.5px;color:#f7941d;font-weight:bold;">T</div>
<div class="t" style="left:1278.40px;top:1052px;font-size:6.5px;color:#ffffff;font-weight:bold;">T</div>
<div class="t" style="left:28.75px;top:407px;font-size:12.0px;color:#ffffff;letter-spacing:-0.75px;">C 3</div>
<div class="t" style="left:27.90px;top:740px;font-size:12.0px;color:#8ccb33;letter-spacing:-0.55px;font-weight:bold;">C 4</div>
<div class="t" style="left:1685.90px;top:138px;font-size:14.0px;color:#d63a5a;letter-spacing:-0.59px;-webkit-text-stroke:0.45px #d63a5a;">3 V</div>
<div class="t" style="left:1685.90px;top:227px;font-size:14.0px;color:#d63a5a;letter-spacing:-0.59px;-webkit-text-stroke:0.45px #d63a5a;">2 V</div>
<div class="t" style="left:1684.90px;top:316px;font-size:14.5px;color:#d63a5a;letter-spacing:-0.30px;-webkit-text-stroke:0.45px #d63a5a;">1 V</div>
<div class="t" style="left:1685.90px;top:405px;font-size:14.0px;color:#d63a5a;letter-spacing:-0.59px;-webkit-text-stroke:0.45px #d63a5a;">0 V</div>
<div class="t" style="left:1680.70px;top:494px;font-size:14.5px;color:#d63a5a;letter-spacing:-0.41px;-webkit-text-stroke:0.45px #d63a5a;">-1 V</div>
<div class="t" style="left:1680.70px;top:583px;font-size:14.5px;color:#d63a5a;letter-spacing:-0.41px;-webkit-text-stroke:0.45px #d63a5a;">-2 V</div>
<div class="t" style="left:1680.70px;top:672px;font-size:14.5px;color:#d63a5a;letter-spacing:-0.41px;-webkit-text-stroke:0.45px #d63a5a;">-3 V</div>
<div class="t" style="left:1680.70px;top:761px;font-size:14.5px;color:#d63a5a;letter-spacing:-0.41px;-webkit-text-stroke:0.45px #d63a5a;">-4 V</div>
<div class="t" style="left:1680.70px;top:850px;font-size:14.5px;color:#d63a5a;letter-spacing:-0.41px;-webkit-text-stroke:0.45px #d63a5a;">-5 V</div>
<div class="t" style="left:1680.70px;top:939px;font-size:14.5px;color:#d63a5a;letter-spacing:-0.41px;-webkit-text-stroke:0.45px #d63a5a;">-6 V</div>
</div>
</body></html>
